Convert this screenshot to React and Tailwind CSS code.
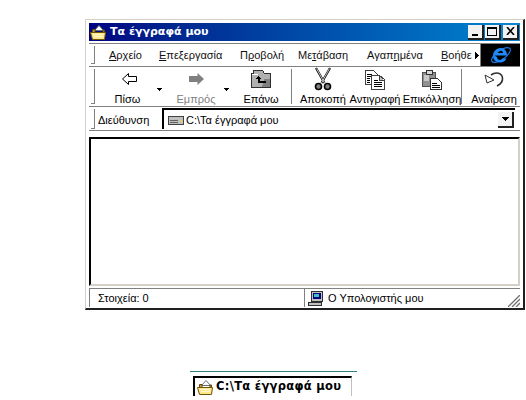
import React from 'react'

const FolderOpen = () => (
  <svg width="17" height="16" viewBox="0 0 17 16" className="shrink-0">
    <path d="M4.5 6.5 L9 1.5 L13.5 6.5 Z" fill="#fff" stroke="#607080" />
    <path d="M2.5 5.5 H5 V9 H13 V6 H14.5 V14.5 H2.5 Z" fill="#c8a030" stroke="#604800" />
    <path d="M0.5 8.5 H15.5 L14.5 15.5 H2.5 Z" fill="#fce88c" stroke="#705400" />
    <path d="M3 10.5 H13 M4 12.5 H13" stroke="#fff8d0" />
  </svg>
)

const Grip = ({ className }) => (
  <div className={"w-[4px] shrink-0 border-b border-r border-b-[#808080] border-r-[#808080] " + className}></div>
)

const ToolButton = ({ label, className, disabled, children }) => (
  <div className={"flex flex-col items-center shrink-0 " + className}>
    <div className="h-[24px] flex items-center justify-center">{children}</div>
    <span className={"mt-[2px] leading-[13px] whitespace-nowrap " + (disabled ? "text-[#808080]" : "text-black")}>{label}</span>
  </div>
)

const Caret = () => (
  <svg width="5" height="3" viewBox="0 0 5 3" className="mt-[6px] shrink-0" shapeRendering="crispEdges"><path d="M0 0H5V1H4V2H3V3H2V2H1V1H0Z" fill="#000" /></svg>
)

const Divider = () => <div className="w-[2px] h-[35px] shrink-0 border-l border-l-[#808080]"></div>

const WinButton = ({ children, className }) => (
  <div className={"w-[16px] h-[15px] bg-[#f2f2f2] border-r-2 border-b-2 border-r-[#202020] border-b-[#202020] flex items-center justify-center " + className}>
    {children}
  </div>
)

export default function App() {
  return (
    <div className="w-[526px] h-[400px] bg-white overflow-hidden text-[11px] text-black" style={{ fontFamily: '"Liberation Sans", sans-serif' }}>
      <div className="ml-[85px] mt-[19px] w-[440px] h-[291px] bg-white border-t border-l border-t-[#d4d0c8] border-l-[#d4d0c8] border-r-2 border-b-2 border-r-[#202020] border-b-[#202020] pt-[3px] px-[3px] pb-[1px] flex flex-col">
        {/* title bar */}
        <div className="h-[18px] bg-gradient-to-r from-[#000080] to-[#1084d0] flex items-center pl-[1px] pr-[1px] shrink-0">
          <FolderOpen />
          <span className="ml-[3px] text-white font-bold text-[11px]" style={{ fontFamily: '"DejaVu Sans", sans-serif' }}>Τα έγγραφά μου</span>
          <div className="ml-auto flex items-center">
            <WinButton>
              <svg width="9" height="9" viewBox="0 0 9 9" shapeRendering="crispEdges"><path d="M1 7H7V9H1Z" fill="#000" /></svg>
            </WinButton>
            <WinButton className="ml-px">
              <svg width="10" height="9" viewBox="0 0 10 9" shapeRendering="crispEdges"><path d="M0 0H10V9H0Z M1 2V8H9V2Z" fill="#000" fillRule="evenodd" /></svg>
            </WinButton>
            <WinButton className="ml-[2px]">
              <svg width="9" height="8" viewBox="0 0 9 8"><path d="M1 0L8 8M8 0L1 8" stroke="#000" strokeWidth="1.6" /></svg>
            </WinButton>
          </div>
        </div>

        {/* menu bar */}
        <div className="mt-[2px] h-[24px] flex border-t border-t-[#808080] border-b border-b-[#808080] shrink-0">
          <div className="flex-1 flex items-center border-r border-r-[#808080]">
            <Grip className="ml-[2px] h-[18px]" />
            <div className="flex items-center pl-[14px] text-[#111]">
              <span className="w-[50px]"><span className="underline">Α</span>ρχείο</span>
              <span className="w-[81px]"><span className="underline">Ε</span>πεξεργασία</span>
              <span className="w-[58px]">Π<span className="underline">ρ</span>οβολή</span>
              <span className="w-[69px]">Με<span className="underline">τ</span>άβαση</span>
              <span className="w-[74px]">Αγαπ<span className="underline">η</span>μένα</span>
              <span className="w-[34px]"><span className="underline">Β</span>οήθε</span>
            </div>
            <svg width="4" height="7" viewBox="0 0 4 7" shapeRendering="crispEdges"><path d="M0 0H1V1H2V2H3V3H4V4H3V5H2V6H1V7H0Z" fill="#000" /></svg>
          </div>
          <div className="w-[39px] bg-black flex items-center justify-center shrink-0">
            <svg width="24" height="22" viewBox="0 0 24 22">
              <ellipse cx="12" cy="11" rx="11" ry="4.5" transform="rotate(-35 12 11)" fill="none" stroke="#1878e0" strokeWidth="1.2" />
              <path d="M5.5 11.5 H18 C18 6 14.5 4 11.5 4 C7 4 4 8 4 12 C4 16 7 18.5 11 18.5 C14 18.5 16.5 17 17.5 14.5 H13.5 C13 15.5 12 16 10.8 16 C9 16 8 14.5 8 13 Z M8.5 9 C9 7.5 10 6.5 11.5 6.5 C13 6.5 14 7.5 14 9 Z" fill="#2088f8" fillRule="evenodd" />
            </svg>
          </div>
        </div>

        {/* toolbar */}
        <div className="h-[40px] flex items-center border-b border-b-[#808080] shrink-0">
          <Grip className="ml-[2px] h-[35px]" />
          <ToolButton label="Πίσω" className="w-[62px] pl-[3px]">
            <svg width="17" height="14" viewBox="0 0 17 14" className="ml-[3px]"><path d="M7.5 1.5 L1.5 7 L7.5 12.5 V9.5 H15.5 V4.5 H7.5 Z" fill="#fff" stroke="#000" strokeWidth="1" /></svg>
          </ToolButton>
          <Caret />
          <ToolButton label="Εμπρός" className="w-[62px] pl-[6px]" disabled>
            <svg width="17" height="14" viewBox="0 0 17 14"><path d="M9.5 1 L16 7 L9.5 13 V10 H1 V4 H9.5 Z" fill="#808080" /></svg>
          </ToolButton>
          <Caret />
          <ToolButton label="Επάνω" className="w-[62px] pl-[2px]">
            <svg width="22" height="20" viewBox="0 0 22 20" shapeRendering="crispEdges">
              <path d="M1.5 4.5 H3.5 V1.5 H12.5 L14.5 4.5 H20.5 V18.5 H1.5 Z" fill="#b0b0b0" stroke="#303030" />
              <path d="M2 5 H8 V6 H2Z" fill="#fff" />
              <path d="M14 10 H20 V18 H12 Z" fill="#808080" />
              <path d="M8.5 7 L5.5 10 H7.5 V13.5 H16 V12 H9.5 V10 H11.5 Z" fill="#000" />
            </svg>
          </ToolButton>
          <Divider />
          <ToolButton label="Αποκοπή" className="w-[54px] pl-[6px]">
            <svg width="18" height="24" viewBox="0 0 18 24">
              <path d="M2 1 L10.5 16 M16 1 L7.5 16" stroke="#000" strokeWidth="2.2" fill="none" />
              <path d="M2.5 1.5 L10.5 16 M15.5 1.5 L7.5 16" stroke="#fff" strokeWidth="0.8" fill="none" />
              <circle cx="4.5" cy="19.5" r="3" fill="#808080" stroke="#000" strokeWidth="1.6" />
              <circle cx="13.5" cy="19.5" r="3" fill="#808080" stroke="#000" strokeWidth="1.6" />
            </svg>
          </ToolButton>
          <ToolButton label="Αντιγραφή" className="w-[56px]">
            <svg width="22" height="21" viewBox="0 0 22 21" shapeRendering="crispEdges">
              <path d="M1.5 1.5 H9.5 L13.5 5.5 V15.5 H1.5 Z" fill="#fff" stroke="#404040" />
              <path d="M3 5H8M3 7H10M3 9H6M3 11H6M3 13H6" stroke="#000" />
              <path d="M7.5 6.5 H15.5 L20.5 10.5 V20.5 H7.5 Z" fill="#fff" stroke="#404040" />
              <path d="M15 7 V11 H20" fill="#c0c0c0" stroke="#404040" />
              <path d="M10 11H14M10 13H18M10 15H18M10 17H18" stroke="#000" />
            </svg>
          </ToolButton>
          <ToolButton label="Επικόλληση" className="w-[58px]">
            <svg width="22" height="21" viewBox="0 0 22 21" shapeRendering="crispEdges">
              <path d="M1.5 3.5 H14.5 V17.5 H1.5 Z" fill="#909090" stroke="#505050" />
              <path d="M5.5 1.5 H11.5 V5.5 H5.5 Z" fill="#d8d8d8" stroke="#303030" />
              <path d="M3 6H8V12H3Z" fill="#c8c8c8" />
              <path d="M9.5 9.5 H16.5 L20.5 13.5 V20.5 H9.5 Z" fill="#fff" stroke="#303030" />
              <path d="M11 14H16M11 16H19M11 18H19" stroke="#000" />
            </svg>
          </ToolButton>
          <Divider />
          <ToolButton label="Αναίρεση" className="w-[58px] pl-[4px]">
            <svg width="20" height="16" viewBox="0 0 20 16">
              <path d="M7 4 C12 0.5 18 2 18.5 7 C18.8 10.5 16 13.5 13 15" fill="none" stroke="#303030" strokeWidth="1.6" />
              <path d="M1 4 L3 12 L10 9 Z" fill="#fff" stroke="#303030" />
            </svg>
          </ToolButton>
        </div>

        {/* address bar */}
        <div className="h-[24px] flex items-end pb-[1px] border-b border-b-[#808080] shrink-0">
          <Grip className="ml-[2px] h-[20px]" />
          <span className="ml-[3px] w-[64px] self-center pt-[4px]">Διεύθυνση</span>
          <div className="w-[353px] h-[21px] bg-white border-t-2 border-l-2 border-t-black border-l-black flex items-center pl-[3px]">
            <svg width="18" height="12" viewBox="0 0 18 12" shapeRendering="crispEdges" className="shrink-0">
              <path d="M1.5 2.5 H16.5 V10.5 H1.5 Z" fill="#c0c0c0" stroke="#404040" />
              <path d="M3 6 H11 M3 8 H11" stroke="#606060" />
              <path d="M13 6H15V8H13Z" fill="#e0d060" />
            </svg>
            <span className="ml-[1px] mt-[2px]">C:\Τα έγγραφά μου</span>
            <div className="ml-auto mr-px w-[16px] h-[16px] bg-[#f2f2f2] border-r-2 border-b-2 border-r-[#202020] border-b-[#202020] flex items-center justify-center">
              <svg width="7" height="4" viewBox="0 0 7 4" shapeRendering="crispEdges"><path d="M0 0H7V1H6V2H5V3H4V4H3V3H2V2H1V1H0Z" fill="#000" /></svg>
            </div>
          </div>
        </div>

        {/* client area */}
        <div className="mt-[6px] flex-1 bg-white border-2 border-t-black border-l-black border-r-[#d4d0c8] border-b-[#d4d0c8]"></div>

        {/* status bar */}
        <div className="mt-[2px] h-[19px] flex border-t border-t-[#808080] shrink-0">
          <div className="w-[216px] border-l border-l-[#808080] border-r border-r-[#808080] flex items-center pl-[8px]">Στοιχεία: 0</div>
          <div className="flex-1 flex items-center pl-[3px] relative">
            <svg width="16" height="16" viewBox="0 0 16 16" shapeRendering="crispEdges">
              <path d="M3.5 1.5 H14.5 V11.5 H3.5 Z" fill="#c0c0c0" stroke="#303030" />
              <path d="M5 3 H13 V9 H5 Z" fill="#000080" />
              <path d="M6 4 H11 V7 H6 Z" fill="#40c0c0" />
              <path d="M0.5 12.5 H13.5 V15.5 H0.5 Z" fill="#c0c0c0" stroke="#303030" />
            </svg>
            <span className="ml-[4px]">Ο Υπολογιστής μου</span>
            <svg width="12" height="12" viewBox="0 0 12 12" className="absolute right-0 bottom-0">
              <path d="M12 0L0 12M12 4L4 12M12 8L8 12" stroke="#707070" strokeWidth="1.3" />
            </svg>
          </div>
        </div>
      </div>

      {/* caption fragment */}
      <div className="ml-[190px] mt-[61px] w-[167px] border-t border-t-[#2f7f7f]">
        <div className="mt-[4px] ml-[3px] w-[159px] h-[20px] border-t-2 border-l-2 border-t-black border-l-black border-r border-r-[#c0c0c0] flex items-center pl-[2px]">
          <FolderOpen />
          <span className="ml-[2px] font-bold text-[11.5px] tracking-[0.3px]" style={{ fontFamily: '"DejaVu Sans", sans-serif' }}>C:\Τα έγγραφά μου</span>
        </div>
      </div>
    </div>
  )
}
